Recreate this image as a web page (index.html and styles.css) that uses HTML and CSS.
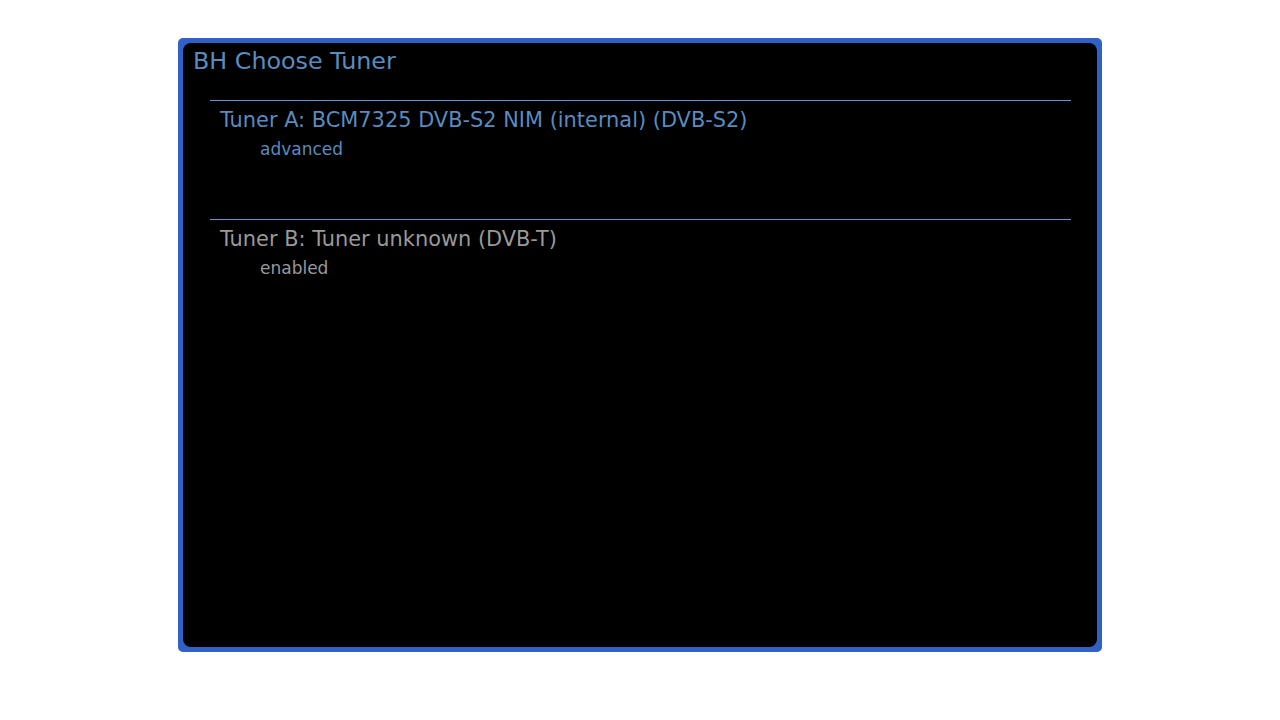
FILE: index.html
```html
<!DOCTYPE html>
<html lang="en">
<head>
  <meta charset="UTF-8">
  <meta name="viewport" content="width=device-width, initial-scale=1.0">
  <title>BH Choose Tuner</title>
  <link rel="stylesheet" href="styles.css">
</head>
<body>
  <div class="frame">
    <div class="screen">
      <h1 class="title">BH Choose Tuner</h1>

      <!-- Tuner list -->
      <ul class="tuners">
        <li class="tuner selected">
          <p class="tuner-name">Tuner A: BCM7325 DVB-S2 NIM (internal) (DVB-S2)</p>
          <p class="tuner-mode">advanced</p>
        </li>
        <li class="tuner">
          <p class="tuner-name">Tuner B: Tuner unknown (DVB-T)</p>
          <p class="tuner-mode">enabled</p>
        </li>
      </ul>
    </div>
  </div>
</body>
</html>
```

FILE: styles.css
```css
body {
  margin: 0;
  background: #fff;
  font-family: "DejaVu Sans", Verdana, sans-serif;
}
.frame {
  width: 914px;
  height: 604px;
  margin: 38px auto 0;
  padding: 5px;
  background: #2f61c7;
  border-radius: 5px;
}
.screen {
  height: 100%;
  background: #000;
  border-radius: 8px;
  overflow: hidden;
}
.title {
  margin: 0;
  padding: 1px 0 0 10px;
  font-size: 23.8px;
  font-weight: normal;
  line-height: 35px;
  color: #5a8bbf;
}
.tuners {
  list-style: none;
  margin: 21px 26px 0 27px;
  padding: 0;
}
.tuner {
  height: 119px;
  color: #999;
}
.tuner::before {
  content: "";
  display: block;
  height: 1px;
  background: #6b92d6;
}
.tuner.selected {
  color: #5a8bbf;
}
.tuner-name {
  margin: 0;
  padding: 6px 0 0 10px;
  font-size: 20.9px;
  line-height: 26px;
}
.tuner-mode {
  margin: 0;
  padding: 5px 0 0 50px;
  font-size: 17px;
  line-height: 22px;
}
```
